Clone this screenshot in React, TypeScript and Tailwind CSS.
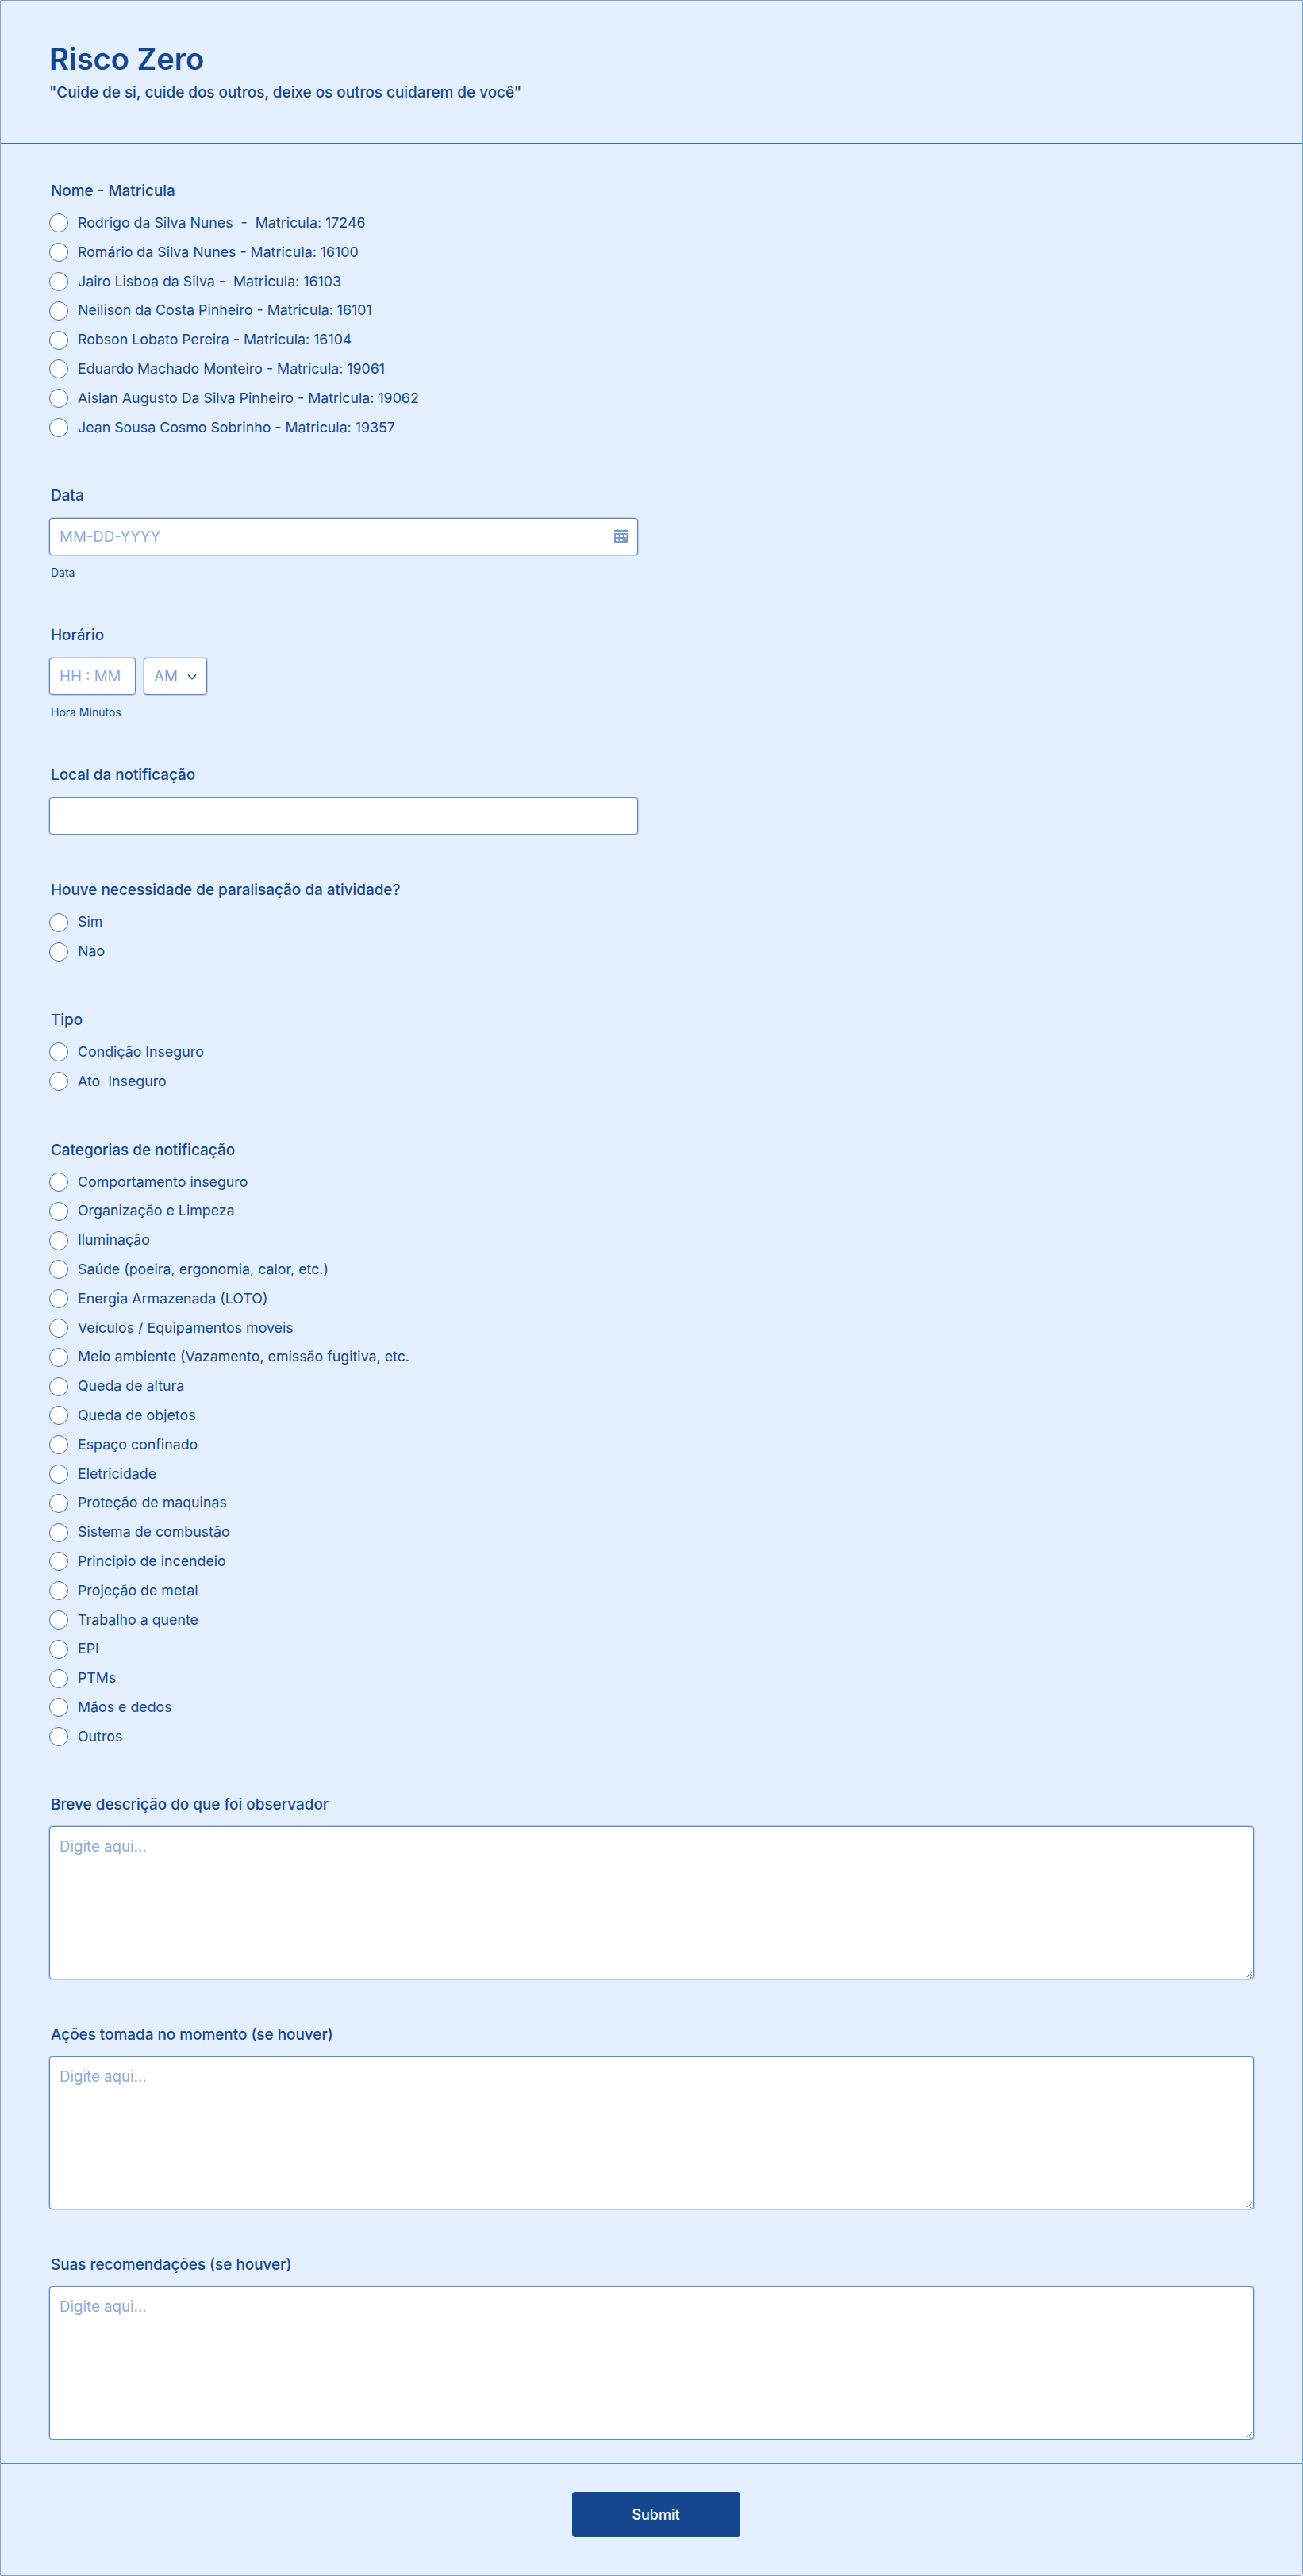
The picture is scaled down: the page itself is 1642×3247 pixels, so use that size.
import React from "react";

const colaboradores = [
  "Rodrigo da Silva Nunes  -  Matricula: 17246",
  "Romário da Silva Nunes - Matricula: 16100",
  "Jairo Lisboa da Silva -  Matricula: 16103",
  "Neilison da Costa Pinheiro - Matricula: 16101",
  "Robson Lobato Pereira - Matricula: 16104",
  "Eduardo Machado Monteiro - Matricula: 19061",
  "Aislan Augusto Da Silva Pinheiro - Matricula: 19062",
  "Jean Sousa Cosmo Sobrinho - Matricula: 19357",
];

const categorias = [
  "Comportamento inseguro",
  "Organização e Limpeza",
  "Iluminação",
  "Saúde (poeira, ergonomia, calor, etc.)",
  "Energia Armazenada (LOTO)",
  "Veículos / Equipamentos moveis",
  "Meio ambiente (Vazamento, emissão fugitiva, etc.",
  "Queda de altura",
  "Queda de objetos",
  "Espaço confinado",
  "Eletricidade",
  "Proteção de maquinas",
  "Sistema de combustão",
  "Principio de incendeio",
  "Projeção de metal",
  "Trabalho a quente",
  "EPI",
  "PTMs",
  "Mãos e dedos",
  "Outros",
];

function Label({ children }: { children: React.ReactNode }) {
  return <div className="h-7 pl-[2px] text-[18.9px] leading-7 font-medium text-[#15478e]">{children}</div>;
}

function RadioGroup({ name, options }: { name: string; options: string[] }) {
  return (
    <div className="mt-2 flex flex-col">
      {options.map((option) => (
        <label key={option} className="flex h-[36.8px] items-center gap-3 text-[17.8px] whitespace-pre text-[#15478e]">
          <input
            type="radio"
            name={name}
            className="m-0 h-6 w-6 shrink-0 appearance-none rounded-full border border-[#3f6db0] bg-white"
          />
          {option}
        </label>
      ))}
    </div>
  );
}

function Sublabel({ children }: { children: React.ReactNode }) {
  return <div className="mt-[14px] h-4 pl-[2px] text-[14px] leading-4 text-[#15478e]">{children}</div>;
}

function TextBlock({ label }: { label: string }) {
  return (
    <div className="mt-[56px]">
      <Label>{label}</Label>
      <textarea
        placeholder="Digite aqui..."
        className="mt-[13px] block h-[193px] w-[1518px] rounded border border-[#6088c4] bg-white px-3 pt-[11px] pb-2 text-[18.7px] text-[#15478e] shadow-[0_0_0_1px_rgba(122,156,208,0.4)] outline-none placeholder:text-[#8dabd8]"
      />
    </div>
  );
}

export default function App() {
  return (
    <div className="h-[3247px] w-[1642px] rounded-br border border-[#7fa1d6] bg-[#e4f0ff] font-['Inter',sans-serif]">
      <header className="h-[180px] border-b border-[#3f6db0] pt-[51px] pl-[61px]">
        <h1 className="text-[38px] leading-[44px] font-semibold text-[#15478e]">Risco Zero</h1>
        <p className="mt-[7px] text-[18.9px] leading-7 font-medium text-[#15478e]">
          "Cuide de si, cuide dos outros, deixe os outros cuidarem de você"
        </p>
      </header>

      <main className="h-[2925px] border-b-2 border-[#5f86c2] pt-[46px] pl-[61px]">
        <section>
          <Label>Nome - Matricula</Label>
          <RadioGroup name="nome" options={colaboradores} />
        </section>

        <section className="mt-[54px]">
          <Label>Data</Label>
          <div className="relative mt-[14px] w-[742px]">
            <input
              placeholder="MM-DD-YYYY"
              className="block h-[47px] w-full rounded border border-[#6088c4] bg-white px-3 text-[18.7px] text-[#15478e] shadow-[0_0_0_1px_rgba(122,156,208,0.4)] outline-none placeholder:text-[#8dabd8]"
            />
            <svg viewBox="0 0 18 18" className="absolute top-[14px] right-[12px] h-[18px] w-[18px]" fill="#7a9cd0">
              <path d="M3 0h2v1H3zM13 0h2v1h-2zM0 1h18v3H0zM0 5h18v13H0z" />
              <path fill="#fff" d="M2 7h3.5v3H2zM7 7h3.5v3H7zM12 7h3.5v3H12zM2 12h3.5v3H2zM7 12h3.5v3H7z" />
            </svg>
          </div>
          <Sublabel>Data</Sublabel>
        </section>

        <section className="mt-[57px]">
          <Label>Horário</Label>
          <div className="mt-[14px] flex gap-[10px]">
            <input
              placeholder="HH : MM"
              className="block h-[47px] w-[109px] rounded border border-[#6088c4] bg-white px-3 text-[18.7px] text-[#15478e] shadow-[0_0_0_1px_rgba(122,156,208,0.4)] outline-none placeholder:text-[#8dabd8]"
            />
            <div className="relative h-[47px] w-[80px]">
              <select className="block h-full w-full appearance-none rounded border border-[#6088c4] bg-white px-3 text-[18.7px] text-[#7a9cd0] shadow-[0_0_0_1px_rgba(122,156,208,0.4)] outline-none">
                <option>AM</option>
              </select>
              <svg viewBox="0 0 12 8" className="absolute top-[20px] right-[13px] h-2 w-3" fill="none" stroke="#15478e" strokeWidth="1.6">
                <path d="M1 1.5l5 5 5-5" />
              </svg>
            </div>
          </div>
          <Sublabel>Hora Minutos</Sublabel>
        </section>

        <section className="mt-[57px]">
          <Label>Local da notificação</Label>
          <input className="mt-[14px] block h-[47px] w-[742px] rounded border border-[#6088c4] bg-white px-3 text-[18px] shadow-[0_0_0_1px_rgba(122,156,208,0.4)] outline-none" />
        </section>

        <section className="mt-[56px]">
          <Label>Houve necessidade de paralisação da atividade?</Label>
          <RadioGroup name="paralisacao" options={["Sim", "Não"]} />
        </section>

        <section className="mt-[54px]">
          <Label>Tipo</Label>
          <RadioGroup name="tipo" options={["Condição Inseguro", "Ato  Inseguro"]} />
        </section>

        <section className="mt-[54px]">
          <Label>Categorias de notificação</Label>
          <RadioGroup name="categoria" options={categorias} />
        </section>

        <div className="-mt-[3px]">
          <TextBlock label="Breve descrição do que foi observador" />
          <TextBlock label="Ações tomada no momento (se houver)" />
          <TextBlock label="Suas recomendações (se houver)" />
        </div>
      </main>

      <footer className="flex justify-center pt-[35px]">
        <button className="ml-[11px] h-[57px] w-[212px] rounded bg-[#15478e] text-[18px] font-medium text-white">Submit</button>
      </footer>
    </div>
  );
}
